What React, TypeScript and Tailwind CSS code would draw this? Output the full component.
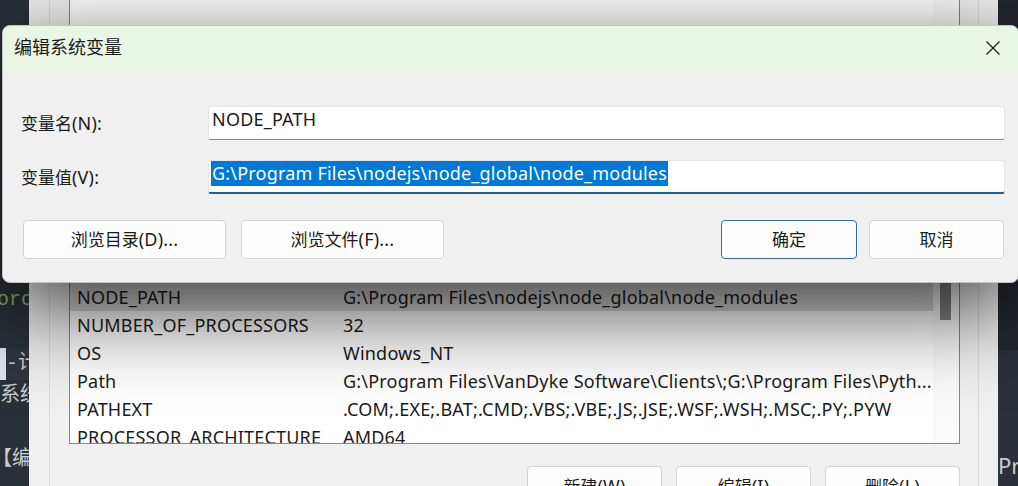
import React from "react";

const ui = { fontFamily: '"Noto Sans", "Noto Sans CJK SC", sans-serif' };
const mono = { fontFamily: '"Liberation Mono", "Noto Sans CJK SC", monospace' };

const hiddenRows = [
  ["ComSpec", "C:\\Windows\\system32\\cmd.exe"],
  ["DriverData", "C:\\Windows\\System32\\Drivers\\DriverData"],
  ["JAVA_HOME", "G:\\Program Files\\Java\\jdk-17"],
  ["MAVEN_HOME", "G:\\Program Files\\apache-maven"],
  ["MYSQL_HOME", "G:\\Program Files\\MySQL"],
  ["NODE_HOME", "G:\\Program Files\\nodejs"],
  ["NUMBER", "1"],
  ["NVM_HOME", "G:\\Program Files\\nvm"],
  ["NVM_SYMLINK", "G:\\Program Files\\nodejs"],
];

const rows = [
  ["NODE_PATH", "G:\\Program Files\\nodejs\\node_global\\node_modules"],
  ["NUMBER_OF_PROCESSORS", "32"],
  ["OS", "Windows_NT"],
  ["Path", "G:\\Program Files\\VanDyke Software\\Clients\\;G:\\Program Files\\Pyth..."],
  ["PATHEXT", ".COM;.EXE;.BAT;.CMD;.VBS;.VBE;.JS;.JSE;.WSF;.WSH;.MSC;.PY;.PYW"],
  ["PROCESSOR_ARCHITECTURE", "AMD64"],
];

// cjk part + latin part, latin drawn a touch larger like YaHei UI
function Mixed({ cjk, latin }: { cjk: string; latin?: string }) {
  return (
    <span className="whitespace-nowrap">
      {cjk}
      {latin && <span className="text-[18px] tracking-[0.2px]">{latin}</span>}
    </span>
  );
}

function WinButton({ cjk, latin, primary, className }: { cjk: string; latin?: string; primary?: boolean; className: string }) {
  return (
    <div
      className={`flex items-center justify-center rounded-[4px] border bg-[#fdfdfd] text-[17px] text-[#1b1b1b] ${
        primary ? "border-[#2c6db0]" : "border-[#d3d3d3]"
      } ${className}`}
    >
      <Mixed cjk={cjk} latin={latin} />
    </div>
  );
}

export default function App() {
  return (
    <div className="relative flex h-[486px] w-[1018px] overflow-hidden bg-[#2b3038]" style={ui}>
      {/* editor behind, left edge */}
      <div className="flex w-[29px] flex-none flex-col overflow-hidden pt-[284px] text-[20px] leading-[32px]" style={mono}>
        <div className="-ml-[3px] whitespace-nowrap text-[#86b274]">oro</div>
        <div className="h-[32px]" />
        <div className="flex items-center whitespace-nowrap bg-[#30353e] text-[#c9cdd2]">
          <span className="-ml-[14px] bg-[#dfe6ee] text-[#222]">】</span>
          <span>-计</span>
        </div>
        <div className="whitespace-nowrap text-[#c9cdd2]">系统</div>
        <div className="h-[32px]" />
        <div className="-ml-[8px] whitespace-nowrap text-[#c9cdd2]">【编</div>
      </div>

      {/* environment variables window behind */}
      <div className="flex w-[969px] flex-none bg-[#f0f0f0] pl-[20px] pr-[19px]">
        <div className="flex flex-1 flex-col border-x border-[#dadada] pl-[19px] pr-[18px]">
          <div className="-mt-[1px] flex h-[445px] border border-[#828790] bg-white">
            <div className="flex-1 overflow-hidden pt-[31px] text-[18px] tracking-[0.2px] text-[#1b1b1b]">
              {[...hiddenRows, ...rows].map(([name, value], i) => (
                <div
                  key={name}
                  className={`flex h-[28px] items-center whitespace-nowrap pl-[7px] ${i === hiddenRows.length ? "bg-[#d9d9d9]" : ""}`}
                >
                  <span className="w-[266px] flex-none">{name}</span>
                  <span>{value}</span>
                </div>
              ))}
            </div>
            <div className="w-[26px] flex-none bg-[#fafafa] pl-[7px] pt-[282px]">
              <div className="h-[38px] w-[11px] bg-[#858585]" />
            </div>
          </div>
          <div className="mt-[22px] flex justify-end gap-[14px]">
            <WinButton cjk="新建" latin="(W)" className="h-[40px] w-[135px]" />
            <WinButton cjk="编辑" latin="(I)" className="h-[40px] w-[135px]" />
            <WinButton cjk="删除" latin="(L)" className="h-[40px] w-[135px]" />
          </div>
        </div>
      </div>

      {/* editor behind, right edge */}
      <div className="flex flex-1 flex-col">
        <div className="h-[350px] bg-[#23272e]" />
        <div className="flex-1 bg-[#2c3139] pt-[100px] text-[22px] leading-[30px] text-[#c7cbd0]">Pr</div>
      </div>

      {/* edit dialog */}
      <div className="absolute left-[2px] top-[25px] flex h-[258px] w-[1017px] flex-col overflow-hidden rounded-[8px] border border-[#c4c4c4] bg-[#f0f0f0] shadow-[0_26px_90px_rgba(0,0,0,0.75)]">
        <div className="flex h-[43px] flex-none items-center justify-between bg-[#eaf6e4] pl-[11px] pr-[18px]">
          <span className="text-[18px] text-[#1b1b1b]">编辑系统变量</span>
          <svg width="14" height="14" viewBox="0 0 14 14">
            <path d="M0.5 0.5 L13.5 13.5 M13.5 0.5 L0.5 13.5" stroke="#1b1b1b" strokeWidth="1.2" fill="none" />
          </svg>
        </div>

        <div className="flex flex-1 flex-col pl-[18px] pr-[13px] pt-[37px] text-[17px] text-[#1b1b1b]">
          <div className="flex h-[34px] items-center">
            <span className="w-[187px] flex-none">
              <Mixed cjk="变量名" latin="(N):" />
            </span>
            <div className="flex h-full flex-1 items-start rounded-[3px] border border-[#e6e6e6] border-b-[#868686] bg-white pl-[3px] text-[18px] leading-[25px] tracking-[0.2px]">
              NODE_PATH
            </div>
          </div>

          <div className="mt-[20px] flex h-[34px] items-center">
            <span className="w-[187px] flex-none">
              <Mixed cjk="变量值" latin="(V):" />
            </span>
            <div className="flex h-full flex-1 items-start rounded-[3px] border border-[#e6e6e6] border-b-2 border-b-[#1c5e9f] bg-white pl-[2px] text-[18px] leading-[25px] tracking-[0.2px]">
              <span className="bg-[#0078d7] px-[1px] text-white">G:\Program Files\nodejs\node_global\node_modules</span>
            </div>
          </div>

          <div className="mt-[26px] flex h-[39px] items-stretch pl-[2px]">
            <WinButton cjk="浏览目录" latin="(D)..." className="w-[203px]" />
            <WinButton cjk="浏览文件" latin="(F)..." className="ml-[15px] w-[203px]" />
            <div className="flex-1" />
            <WinButton cjk="确定" primary className="w-[136px]" />
            <WinButton cjk="取消" className="ml-[12px] mr-[1px] w-[135px]" />
          </div>
        </div>
      </div>
    </div>
  );
}
